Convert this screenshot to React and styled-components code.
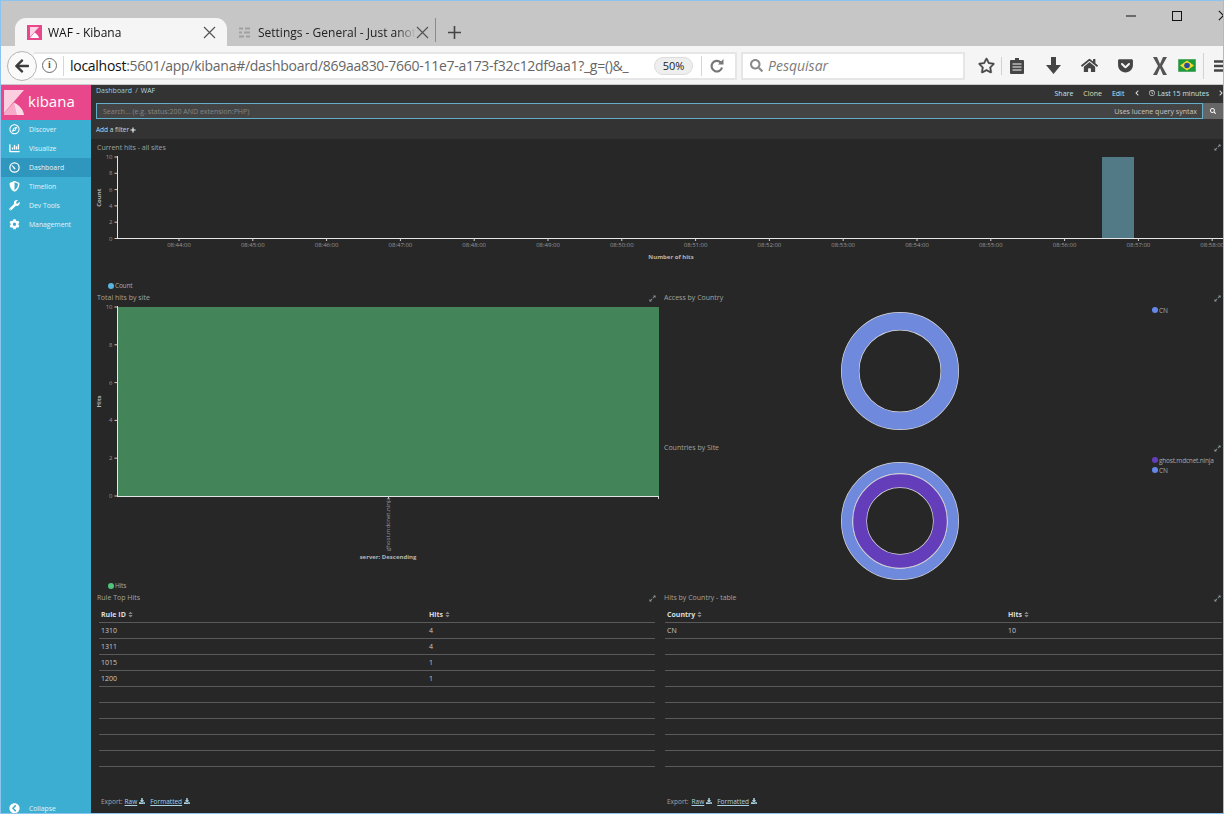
import React from "react";
import styled, { createGlobalStyle } from "styled-components";
import {
  FaArrowLeft, FaHome, FaGetPocket, FaRegStar, FaSearch, FaRegCompass, FaChartBar,
  FaShieldAlt, FaWrench, FaCog, FaChevronCircleLeft, FaChevronLeft, FaChevronRight, FaRegClock,
  FaPlus, FaSort, FaDownload, FaExpandAlt,
} from "react-icons/fa";

const Global = createGlobalStyle`
  html, body { margin: 0; padding: 0; background: #272727; }
  body { font-family: "Open Sans", "Liberation Sans", sans-serif; }
  * { box-sizing: border-box; }
`;

const Window = styled.div`
  width: 1224px;
  height: 814px;
  border: 1px solid #8dc3ef;
  display: flex;
  flex-direction: column;
  overflow: hidden;
`;

/* browser chrome */
const TitleBar = styled.div`
  height: 45px;
  flex: none;
  background: #c6c6c6;
  display: flex;
  align-items: flex-end;
  padding-left: 14px;
  position: relative;
`;

const ActiveTab = styled.div`
  width: 212px;
  height: 28px;
  background: #f5f5f5;
  border-radius: 11px 11px 0 0;
  display: flex;
  align-items: center;
  padding: 0 11px 0 12px;
  font-size: 12px;
  color: #111;
`;

const Tab = styled.div`
  width: 197px;
  height: 28px;
  display: flex;
  align-items: center;
  padding-left: 12px;
  font-size: 12px;
  color: #222;
`;

const TabText = styled.span`
  margin-left: ${(p) => p.$gap}px;
  flex: 1;
  white-space: nowrap;
  -webkit-mask-image: linear-gradient(to right, #000 88%, transparent);
  mask-image: linear-gradient(to right, #000 88%, transparent);
`;

const TabDivider = styled.div`
  width: 1px;
  height: 24px;
  background: #8a8a8a;
  margin: 0 0 4px 11px;
`;

const NewTab = styled.div`
  width: 36px;
  height: 28px;
  display: flex;
  align-items: center;
  justify-content: center;
`;

const WindowButtons = styled.div`
  position: absolute;
  top: 9px;
  right: -6px;
  display: flex;
  align-items: center;
  gap: 36px;
`;

const Toolbar = styled.div`
  height: 39px;
  flex: none;
  background: #f5f5f5;
  border-bottom: 1px solid #c9c9c9;
  display: flex;
  align-items: center;
  padding: 1px 0 0 6px;
  position: relative;
`;

const BackButton = styled.div`
  width: 30px;
  height: 30px;
  border-radius: 50%;
  background: #fafafa;
  border: 1px solid #b4b4b4;
  display: flex;
  align-items: center;
  justify-content: center;
  color: #3c3c3c;
  font-size: 16px;
  flex: none;
  z-index: 1;
`;

const UrlBox = styled.div`
  width: 703px;
  height: 28px;
  margin-left: -3px;
  background: #fff;
  border: 2px solid #e6e6e6;
  border-left: none;
  display: flex;
  align-items: center;
  flex: none;
  font-size: 14px;
  color: #666;
`;

const InfoGlyph = styled.div`
  margin-left: 8px;
  width: 15px;
  height: 15px;
  flex: none;
  border-radius: 50%;
  border: 1.5px solid #6b6b6b;
  color: #555;
  font: bold 10px/12px "Liberation Serif", serif;
  text-align: center;
`;

const BoxDivider = styled.div`
  width: 1px;
  height: 20px;
  margin: ${(p) => p.$margin};
  background: #d6d6d6;
  flex: none;
`;

const UrlText = styled.div`
  width: 562px;
  flex: none;
  white-space: nowrap;
  letter-spacing: -0.28px;
  b { font-weight: 400; color: #111; }
`;

const ZoomPill = styled.div`
  margin-left: 22px;
  width: 39px;
  height: 18px;
  border-radius: 9px;
  background: #eee;
  border: 1px solid #ddd;
  color: #222;
  font-size: 11px;
  line-height: 16px;
  text-align: center;
  flex: none;
`;

const SearchBox = styled.div`
  width: 224px;
  height: 28px;
  margin-left: 4px;
  background: #fff;
  border: 2px solid #e6e6e6;
  display: flex;
  align-items: center;
  padding-left: 7px;
  color: #7c7c7c;
  flex: none;
  font-size: 14px;
  font-style: italic;
  gap: 5px;
`;

const ToolIcons = styled.div`
  display: flex;
  align-items: center;
  margin-left: 6px;
  color: #454545;
  font-size: 17px;
  flex: none;
`;

const ToolSlot = styled.div`
  width: ${(p) => p.$w}px;
  flex: none;
  display: flex;
  justify-content: center;
  align-items: center;
`;

const ToolDivider = styled.div`
  width: 1px;
  height: ${(p) => p.$h}px;
  background: #d2d2d2;
  flex: none;
`;

/* kibana */
const Kibana = styled.div`
  flex: 1;
  min-height: 0;
  display: flex;
`;

const Sidebar = styled.nav`
  width: 90px;
  flex: none;
  background: #3caed2;
  display: flex;
  flex-direction: column;
`;

const Logo = styled.div`
  height: 35px;
  background: #e8488b;
  display: flex;
  align-items: center;
  padding-left: 3px;
  gap: 4px;
  color: #fff;
  font-size: 15px;
  span { margin-top: -3px; }
`;

const NavItem = styled.div`
  height: 19px;
  display: flex;
  align-items: center;
  padding-left: 8px;
  font-size: 6.8px;
  color: #e4f4f9;
  background: ${(p) => (p.$active ? "#2f96bd" : "transparent")};
  svg { font-size: 10.5px; color: #fff; width: 11px; flex: none; }
  span { margin-left: 9px; }
`;

const SidebarFoot = styled.div`
  margin-top: auto;
  ${NavItem} { height: 10px; }
`;

const Main = styled.main`
  flex: 1;
  min-width: 0;
  background: #272727;
  display: flex;
  flex-direction: column;
`;

const TopBar = styled.header`
  height: 54px;
  flex: none;
  background: #333;
  display: flex;
  flex-direction: column;
  font-size: 7px;
`;

const MenuRow = styled.div`
  height: 18px;
  padding: 0 0 0 5px;
  display: flex;
  color: #d5e6ec;
`;

const Crumbs = styled.div`
  color: #8fd0e6;
  padding-top: 1px;
  span { color: #bbb; margin: 0 3px; }
  b { font-weight: 400; color: #b8d6e0; }
`;

const MenuLinks = styled.div`
  margin-left: auto;
  display: flex;
  align-items: center;
  padding-bottom: 2px;
  margin-right: -1px;
  svg { font-size: 6px; color: #e0e0e0; }
`;

const MenuLink = styled.span`
  margin-right: ${(p) => p.$right}px;
  color: ${(p) => p.$color || "#bfe4f0"};
  display: flex;
  align-items: center;
  gap: 2px;
`;

const SearchRow = styled.div`
  height: 16px;
  margin-left: 5px;
  display: flex;
`;

const QueryInput = styled.div`
  flex: 1;
  background: #444;
  border: 1px solid #62aec9;
  display: flex;
  align-items: center;
  justify-content: space-between;
  padding: 0 5px 0 6px;
  color: #858585;
  span { color: #c4c4c4; }
`;

const QueryButton = styled.div`
  width: 20px;
  background: #666;
  color: #fff;
  font-size: 6px;
  display: flex;
  align-items: center;
  justify-content: center;
`;

const FilterRow = styled.div`
  flex: 1;
  padding: 1px 0 0 5px;
  display: flex;
  align-items: center;
  gap: 1px;
  font-size: 6.5px;
  color: #b4dfee;
  svg { font-size: 6px; color: #e8f4f8; }
`;

const Dashboard = styled.div`
  flex: 1;
  min-height: 0;
  display: grid;
  grid-template-columns: 567px 1fr;
  grid-template-rows: 152px 150px 150px 1fr;
`;

const Panel = styled.section`
  min-width: 0;
  display: flex;
  flex-direction: column;
  grid-column: ${(p) => p.$column || "auto"};
  grid-row: ${(p) => p.$row || "auto"};
`;

const PanelHead = styled.div`
  height: ${(p) => p.$h || 12}px;
  flex: none;
  display: flex;
  justify-content: space-between;
  align-items: ${(p) => (p.$h ? "flex-start" : "center")};
  padding: ${(p) => (p.$h ? "4px" : "2px")} 2px 0 6px;
  font-size: 7px;
  line-height: 10px;
  color: #a3a39b;
  svg { font-size: 7px; color: #8a9aa0; margin-top: 1px; }
`;

const ChartSvg = styled.svg`
  display: block;
  flex: none;
  overflow: visible;
`;

const Tick = styled.text`
  font-size: 6px;
  fill: #989898;
`;

const AxisName = styled.text`
  font-size: 6px;
  font-weight: 700;
  fill: #b5b5b5;
`;

const LegendRow = styled.div`
  height: 11px;
  padding-left: 17px;
  display: flex;
  align-items: center;
  font-size: 6.5px;
  letter-spacing: -0.2px;
  color: #a8a8a8;
`;

const Dot = styled.i`
  width: 6px;
  height: 6px;
  border-radius: 50%;
  flex: none;
  margin-right: 1px;
  background: ${(p) => p.$color};
`;

const PieBody = styled.div`
  flex: 1;
  display: flex;
`;

const PieLegend = styled.div`
  margin-left: 10px;
  padding-top: 2px;
  display: flex;
  flex-direction: column;
  ${LegendRow} { height: 10px; padding-left: 0; }
`;

const TableWrap = styled.div`
  padding: ${(p) => p.$pad};
  flex: 1;
  display: flex;
  flex-direction: column;
`;

const Row = styled.div`
  display: grid;
  grid-template-columns: ${(p) => p.$col}px 1fr;
  height: ${(p) => (p.$head ? 20 : 16)}px;
  border-bottom: 1px solid #5a5a5a;
  padding-left: 2px;
  align-items: ${(p) => (p.$head ? "end" : "center")};
  font-size: 7px;
  font-weight: ${(p) => (p.$head ? 700 : 400)};
  color: ${(p) => (p.$head ? "#dcdcdc" : "#c9c9c9")};
  padding-bottom: ${(p) => (p.$head ? "3px" : "0")};
  svg { font-size: 7px; color: #858585; margin-left: 1px; vertical-align: -0.5px; }
`;

const ExportRow = styled.div`
  margin-top: auto;
  padding: 0 0 6px 2px;
  height: 18px;
  display: flex;
  align-items: center;
  font-size: 6.5px;
  color: #a5a5a5;
`;

const ExportLink = styled.span`
  margin-left: ${(p) => p.$left}px;
  color: #a8d2e2;
  display: flex;
  align-items: center;
  gap: 2px;
  u { text-underline-offset: 1px; }
  svg { font-size: 6px; color: #a8d2e2; }
`;

const KMark = ({ size }) => (
  <svg width={size} height={size * 1.25} viewBox="0 0 20 25">
    <path d="M0 0H20L0 23Z" fill="#fbcfe0" />
    <path d="M0 25L10 12.5C15 15 19 19 20 25Z" fill="#fff" opacity="0.8" />
    <path d="M0 23L10 12.5L13 25H0Z" fill="#f7a9c8" />
  </svg>
);

const Favicon = () => (
  <svg width="15" height="15" viewBox="0 0 15 15" style={{ flex: "none" }}>
    <rect width="15" height="15" fill="#e8488b" />
    <path d="M3 2H12L3 12Z" fill="#fbd5e4" />
    <path d="M3 13L7.5 7.5C10 9 11.5 11 12 13Z" fill="#fff" />
  </svg>
);

const Cross = ({ size = 13, color = "#555" }) => (
  <svg width={size} height={size} viewBox="0 0 13 13" style={{ flex: "none" }}>
    <path d="M1 1L12 12M12 1L1 12" stroke={color} strokeWidth="1.2" />
  </svg>
);

const SiteGlyph = () => (
  <svg width="11" height="11" viewBox="0 0 11 11" style={{ flex: "none" }}>
    <path d="M0 1.5H4M6 1.5H11M0 5.5H3M5 5.5H11M0 9.5H5M7 9.5H11" stroke="#a0a0a0" strokeWidth="2" />
  </svg>
);

const GaugeIcon = () => (
  <svg width="11" height="11" viewBox="0 0 10 10">
    <circle cx="5" cy="5" r="4.2" fill="none" stroke="#fff" strokeWidth="1.1" />
    <path d="M2.6 3L5.6 5.6L5 6.6L2.6 3Z" fill="#fff" stroke="#fff" strokeWidth="0.6" />
  </svg>
);

const ReaderIcon = () => (
  <svg width="16" height="18" viewBox="0 0 16 18">
    <path d="M6 1H10V3H14Q15 3 15 4V16Q15 17 14 17H2Q1 17 1 16V4Q1 3 2 3H6Z" fill="#454545" />
    <path d="M3.5 7H12.5M3.5 10H12.5M3.5 13H12.5" stroke="#f5f5f5" strokeWidth="1.2" />
  </svg>
);

const DownArrow = () => (
  <svg width="15" height="17" viewBox="0 0 15 17">
    <path d="M5 0H10V8H15L7.5 17L0 8H5Z" fill="#454545" />
  </svg>
);

const ReloadIcon = () => (
  <svg width="16" height="16" viewBox="0 0 16 16">
    <path d="M13 9.5A5.3 5.3 0 1 1 11.6 4.4" fill="none" stroke="#777" strokeWidth="2.2" />
    <path d="M9 6.5H14.5V1Z" fill="#777" />
  </svg>
);

const AddonX = () => (
  <svg width="16" height="20" viewBox="0 0 16 20">
    <path d="M1 1H5L8 8L11 1H15L10 10L15 19H11L8 12L5 19H1L6 10Z" fill="#555" />
  </svg>
);

const Flag = () => (
  <svg width="18" height="13" viewBox="0 0 18 13">
    <rect width="18" height="13" fill="#1f9a3b" stroke="#d8d8d8" strokeWidth="0.6" />
    <path d="M9 1.5L16 6.5L9 11.5L2 6.5Z" fill="#f4d92c" />
    <circle cx="9" cy="6.5" r="2.8" fill="#2a4a9a" />
  </svg>
);

const MenuBars = () => (
  <svg width="14" height="14" viewBox="0 0 14 14">
    <path d="M0 2.5H14M0 7H14M0 11.5H14" stroke="#454545" strokeWidth="2.4" />
  </svg>
);

const hitTimes = Array.from({ length: 15 }, (_, i) => `08:${44 + i}:00`);

// y axis with tick marks and labels, shared by both bar charts
const YAxis = ({ x, top, bottom, values, name }) => (
  <g>
    <path d={`M${x} ${top - 1}V${bottom}`} stroke="#e6e6e6" strokeWidth="1" />
    {values.map((v, i) => {
      const y = bottom - ((bottom - top) * i) / (values.length - 1);
      return (
        <g key={v}>
          <path d={`M${x - 3} ${y}H${x}`} stroke="#cfcfcf" />
          <Tick x={x - 5} y={y + 2} textAnchor="end">{v}</Tick>
        </g>
      );
    })}
    <AxisName
      x={x - 17}
      y={(top + bottom) / 2}
      textAnchor="middle"
      transform={`rotate(-90 ${x - 17} ${(top + bottom) / 2})`}
    >
      {name}
    </AxisName>
  </g>
);

const HitsChart = () => (
  <ChartSvg width="1132" height="125" viewBox="0 0 1132 125">
    <rect x="1011" y="2" width="32" height="81.5" fill="#527a86" />
    <YAxis x={26.5} top={2} bottom={83.5} values={[0, 2, 4, 6, 8, 10]} name="Count" />
    <path d="M26 83.5H1132" stroke="#e6e6e6" />
    {hitTimes.map((t, i) => {
      const x = 88 + i * 73.8;
      return (
        <g key={t}>
          <path d={`M${x} 83.5V86`} stroke="#cfcfcf" />
          <Tick x={x} y={92} textAnchor="middle">{t}</Tick>
        </g>
      );
    })}
    <AxisName x="580" y="104" textAnchor="middle">Number of hits</AxisName>
  </ChartSvg>
);

const SiteChart = () => (
  <ChartSvg width="568" height="277" viewBox="0 0 568 277">
    <rect x="26" y="4" width="542" height="189" fill="#438559" />
    <YAxis x={26.5} top={4} bottom={193} values={[0, 2, 4, 6, 8, 10]} name="Hits" />
    <path d="M26 193.5H568" stroke="#e6e6e6" />
    <path d="M297.5 193.5V196M567.5 193.5V196" stroke="#cfcfcf" />
    <Tick x="299" y="248" transform="rotate(-90 299 248)">ghost.mdcnet.ninja</Tick>
    <AxisName x="297" y="256" textAnchor="middle">server: Descending</AxisName>
  </ChartSvg>
);

const Ring = ({ outer, inner, color, cy }) => {
  const r = (outer + inner) / 2;
  return (
    <>
      <circle cx="242" cy={cy} r={r} fill="none" stroke="#d8d8d8" strokeWidth={outer - inner + 1} />
      <circle cx="242" cy={cy} r={r} fill="none" stroke={color} strokeWidth={outer - inner - 0.4} />
    </>
  );
};

const Donut = ({ rings }) => (
  <ChartSvg width="484" height="138" viewBox="0 0 484 138">
    {rings.map((ring) => (
      <Ring key={ring.color} cy={68} {...ring} />
    ))}
  </ChartSvg>
);

const ruleRows = [["1310", "4"], ["1311", "4"], ["1015", "1"], ["1200", "1"]];
const countryRows = [["CN", "10"]];

const HitsTable = ({ head, rows, col, pad, exportGap }) => (
  <TableWrap $pad={pad}>
    <Row $head $col={col}>
      <span>{head}<FaSort /></span>
      <span>Hits<FaSort /></span>
    </Row>
    {Array.from({ length: 9 }, (_, i) => (
      <Row key={i} $col={col}>
        <span>{rows[i] ? rows[i][0] : ""}</span>
        <span>{rows[i] ? rows[i][1] : ""}</span>
      </Row>
    ))}
    <ExportRow>
      Export:
      <ExportLink $left={exportGap}><u>Raw</u><FaDownload /></ExportLink>
      <ExportLink $left={5}><u>Formatted</u><FaDownload /></ExportLink>
    </ExportRow>
  </TableWrap>
);

const navItems = [
  { label: "Discover", icon: <FaRegCompass /> },
  { label: "Visualize", icon: <FaChartBar /> },
  { label: "Dashboard", icon: <GaugeIcon />, active: true },
  { label: "Timelion", icon: <FaShieldAlt /> },
  { label: "Dev Tools", icon: <FaWrench /> },
  { label: "Management", icon: <FaCog /> },
];

const App = () => (
  <Window>
    <Global />
    <TitleBar>
      <ActiveTab>
        <Favicon />
        <TabText $gap={6}>WAF - Kibana</TabText>
        <Cross />
      </ActiveTab>
      <Tab>
        <SiteGlyph />
        <TabText $gap={8}>Settings - General - Just anot</TabText>
        <Cross />
      </Tab>
      <TabDivider />
      <NewTab>
        <svg width="13" height="13" viewBox="0 0 13 13">
          <path d="M6.5 0V13M0 6.5H13" stroke="#444" strokeWidth="1.6" />
        </svg>
      </NewTab>
      <WindowButtons>
        <svg width="10" height="10" viewBox="0 0 10 10"><path d="M0 5H10" stroke="#111" /></svg>
        <svg width="10" height="10" viewBox="0 0 10 10"><rect x="0.5" y="0.5" width="9" height="9" fill="none" stroke="#111" /></svg>
        <Cross size={11} color="#111" />
      </WindowButtons>
    </TitleBar>
    <Toolbar>
      <BackButton><FaArrowLeft /></BackButton>
      <UrlBox>
        <InfoGlyph>i</InfoGlyph>
        <BoxDivider $margin="0 6px 0 6px" />
        <UrlText><b>localhost</b>:5601/app/kibana#/dashboard/869aa830-7660-11e7-a173-f32c12df9aa1?_g=()&amp;_</UrlText>
        <ZoomPill>50%</ZoomPill>
        <BoxDivider $margin="0 7px 0 8px" />
        <ReloadIcon />
      </UrlBox>
      <SearchBox><FaSearch color="#8a8a8a" size={13} />Pesquisar</SearchBox>
      <ToolIcons>
        <ToolSlot $w={30}><FaRegStar stroke="#454545" strokeWidth="14" /></ToolSlot>
        <ToolDivider $h={18} />
        <ToolSlot $w={30}><ReaderIcon /></ToolSlot>
        <ToolSlot $w={42}><DownArrow /></ToolSlot>
        <ToolSlot $w={30}><FaHome /></ToolSlot>
        <ToolSlot $w={42}><FaGetPocket /></ToolSlot>
        <ToolSlot $w={28}><AddonX /></ToolSlot>
        <ToolSlot $w={26}><Flag /></ToolSlot>
        <ToolSlot $w={3} />
        <ToolDivider $h={26} />
        <ToolSlot $w={34}><MenuBars /></ToolSlot>
      </ToolIcons>
    </Toolbar>
    <Kibana>
      <Sidebar>
        <Logo><KMark size={20} /><span>kibana</span></Logo>
        {navItems.map((item) => (
          <NavItem key={item.label} $active={item.active}>
            {item.icon}
            <span>{item.label}</span>
          </NavItem>
        ))}
        <SidebarFoot>
          <NavItem>
            <FaChevronCircleLeft />
            <span>Collapse</span>
          </NavItem>
        </SidebarFoot>
      </Sidebar>
      <Main>
        <TopBar>
          <MenuRow>
            <Crumbs>Dashboard<span>/</span><b>WAF</b></Crumbs>
            <MenuLinks>
              <MenuLink $right={10}>Share</MenuLink>
              <MenuLink $right={10} $color="#e6d9a8">Clone</MenuLink>
              <MenuLink $right={10}>Edit</MenuLink>
              <MenuLink $right={9}><FaChevronLeft /></MenuLink>
              <MenuLink $right={9}><FaRegClock />Last 15 minutes</MenuLink>
              <MenuLink $right={0}><FaChevronRight /></MenuLink>
            </MenuLinks>
          </MenuRow>
          <SearchRow>
            <QueryInput>
              Search... (e.g. status:200 AND extension:PHP)
              <span>Uses lucene query syntax</span>
            </QueryInput>
            <QueryButton><FaSearch /></QueryButton>
          </SearchRow>
          <FilterRow>Add a filter <FaPlus /></FilterRow>
        </TopBar>
        <Dashboard>
          <Panel $column="1 / 3">
            <PanelHead $h={16}>Current hits - all sites<FaExpandAlt /></PanelHead>
            <HitsChart />
            <LegendRow><Dot $color="#57b5e0" />Count</LegendRow>
          </Panel>
          <Panel $row="2 / 4">
            <PanelHead>Total hits by site<FaExpandAlt /></PanelHead>
            <SiteChart />
            <LegendRow><Dot $color="#4fc47a" />Hits</LegendRow>
          </Panel>
          <Panel>
            <PanelHead>Access by Country<FaExpandAlt /></PanelHead>
            <PieBody>
              <Donut rings={[{ outer: 58.5, inner: 41, color: "#6f89dc" }]} />
              <PieLegend>
                <LegendRow><Dot $color="#6488e8" />CN</LegendRow>
              </PieLegend>
            </PieBody>
          </Panel>
          <Panel>
            <PanelHead>Countries by Site<FaExpandAlt /></PanelHead>
            <PieBody>
              <Donut
                rings={[
                  { outer: 58.5, inner: 47.5, color: "#6f89dc" },
                  { outer: 47, inner: 33.5, color: "#643dbb" },
                ]}
              />
              <PieLegend>
                <LegendRow><Dot $color="#643dbb" />ghost.mdcnet.ninja</LegendRow>
                <LegendRow><Dot $color="#6488e8" />CN</LegendRow>
              </PieLegend>
            </PieBody>
          </Panel>
          <Panel>
            <PanelHead>Rule Top Hits<FaExpandAlt /></PanelHead>
            <HitsTable head="Rule ID" rows={ruleRows} col={328} pad="0 3px 0 8px" exportGap={2} />
          </Panel>
          <Panel>
            <PanelHead>Hits by Country - table<FaExpandAlt /></PanelHead>
            <HitsTable head="Country" rows={countryRows} col={341} pad="0 1px 0 7px" exportGap={3} />
          </Panel>
        </Dashboard>
      </Main>
    </Kibana>
  </Window>
);

export default App;
